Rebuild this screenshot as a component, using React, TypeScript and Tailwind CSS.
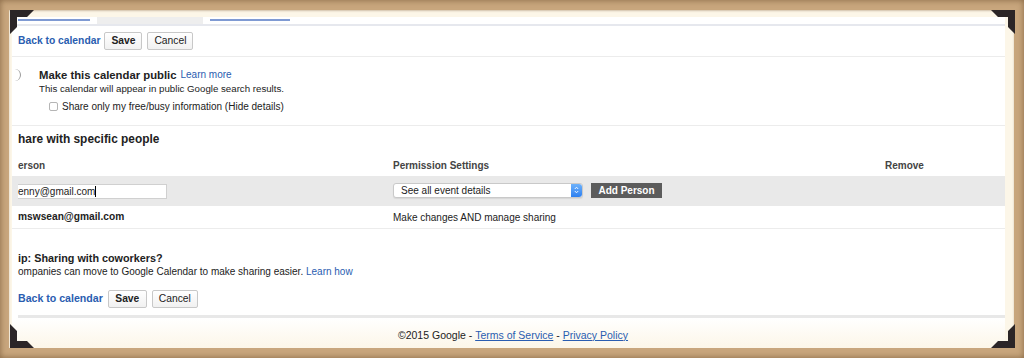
import React from "react";

const Corner = ({ className, rotate }: { className: string; rotate: string }) => (
  <svg
    width="24"
    height="24"
    viewBox="0 0 24 24"
    className={`absolute ${className}`}
    style={{ transform: `rotate(${rotate})` }}
  >
    <polygon points="0,0 24,0 17,7 7,7 7,17 0,24" fill="#2b2527" />
  </svg>
);

function Btn({ label, bold, w }: { label: string; bold?: boolean; w: string }) {
  return (
    <div
      className={`${w} h-[18px] flex items-center justify-center rounded-[2px] border border-[#c8c8c8] bg-gradient-to-b from-white to-[#f1f1f1] text-[10.3px] text-[#222] ${
        bold ? "font-bold" : ""
      }`}
    >
      {label}
    </div>
  );
}

function Toolbar({ big }: { big?: boolean }) {
  return (
    <div className="flex items-center pl-[6px]">
      <span className={`${big ? "text-[10.6px] mr-[5px]" : "text-[10.3px] mr-[4px]"} font-bold text-[#2a5db0]`}>
        Back to calendar
      </span>
      <Btn label="Save" bold w={big ? "w-[39px]" : "w-[38px]"} />
      <div className="w-[5px]" />
      <Btn label="Cancel" w="w-[46px]" />
    </div>
  );
}

export default function App() {
  return (
    <div className="relative w-[1024px] h-[358px] overflow-hidden bg-[#c8a67d] pt-[10px] pl-[9px] pr-[10px] pb-[10px] font-['Liberation_Sans',Arial,sans-serif] shadow-[inset_0_0_6px_rgba(90,60,30,0.6)]">
      <div className="h-full bg-[#fcf6e8] pt-[7px] pl-[3px] pr-[9px] flex flex-col shadow-[inset_0_1px_2px_rgba(120,90,50,0.35)]">
        <div className="flex-1 bg-white overflow-hidden flex flex-col text-[#222]">
          {/* tabs */}
          <div className="h-[9px] flex items-start border-b-2 border-[#e6e8ee]">
            <div className="ml-[6px] mt-[2px] w-[72px] h-[2px] bg-[#7f9ad3]" />
            <div className="ml-[7px] w-[106px] h-[7px] bg-[#eeeeee]" />
            <div className="ml-[7px] mt-[2px] w-[80px] h-[2px] bg-[#7f9ad3]" />
          </div>

          <div className="h-[31px] flex items-center border-b border-[#ececec]">
            <Toolbar />
          </div>

          {/* public */}
          <div className="h-[69px] pt-[11px] border-b border-[#ececec]">
            <div className="flex items-center h-[14px]">
              <div className="-ml-[3px] w-[12px] h-[12px] rounded-full border-r border-[#9a9a9a]" />
              <span className="ml-[18px] text-[11.3px] font-bold leading-[14px]">Make this calendar public</span>
              <span className="ml-[4px] text-[10px] text-[#2a5db0] leading-[14px]">Learn more</span>
            </div>
            <div className="pl-[27px] text-[9.7px] leading-[14px]">
              This calendar will appear in public Google search results.
            </div>
            <div className="mt-[3px] h-[15px] flex items-center pl-[37px]">
              <div className="w-[9px] h-[9px] rounded-[2px] border border-[#b5b5b5] bg-white" />
              <span className="ml-[4px] text-[10px]">Share only my free/busy information (Hide details)</span>
            </div>
          </div>

          {/* share */}
          <div className="pt-[5px]">
            <div className="pl-[6px] text-[11.9px] font-bold leading-[16px]">hare with specific people</div>
            <div className="h-[29px] grid grid-cols-[381px_492px_1fr] items-end pb-[4px] text-[10px] font-bold text-[#444] leading-[13px]">
              <div className="pl-[6px]">erson</div>
              <div>Permission Settings</div>
              <div>Remove</div>
            </div>
            <div className="h-[30px] grid grid-cols-[381px_492px_1fr] items-center bg-[#e9e9e9]">
              <div className="pl-[6px]">
                <div className="w-[149px] h-[15px] bg-white border-y border-r border-[#d0d0d0] flex items-center text-[10px]">
                  enny@gmail.com
                  <span className="w-px h-[11px] bg-black" />
                </div>
              </div>
              <div className="flex items-center -mt-[2px]">
                <div className="w-[190px] h-[15px] bg-white rounded-[3px] border border-[#c9c9c9] flex items-center justify-between shadow-[0_1px_1px_rgba(0,0,0,0.08)]">
                  <span className="pl-[7px] text-[10px] text-[#222]">See all event details</span>
                  <div className="w-[11px] h-[13px] rounded-r-[3px] bg-gradient-to-b from-[#6eb2fb] to-[#2c7ff0] flex items-center justify-center">
                    <svg width="5" height="8" viewBox="0 0 5 8">
                      <path d="M0.8 3 L2.5 1.2 L4.2 3 M0.8 5 L2.5 6.8 L4.2 5" stroke="white" strokeWidth="0.9" fill="none" />
                    </svg>
                  </div>
                </div>
                <div className="ml-[8px] w-[71px] h-[15px] bg-[#5c5c5c] text-white font-bold text-[10px] flex items-center justify-center">
                  Add Person
                </div>
              </div>
              <div />
            </div>
            <div className="h-[23px] grid grid-cols-[381px_492px_1fr] items-center border-b border-[#ececec] text-[10px]">
              <div className="pl-[6px] font-bold text-[10.2px]">mswsean@gmail.com</div>
              <div>Make changes AND manage sharing</div>
              <div />
            </div>
          </div>

          {/* tip */}
          <div className="mt-[22px] pl-[6px]">
            <div className="text-[10.8px] font-bold leading-[14px]">ip: Sharing with coworkers?</div>
            <div className="text-[10px] leading-[14px]">
              ompanies can move to Google Calendar to make sharing easier.{" "}
              <span className="text-[#2a5db0]">Learn how</span>
            </div>
          </div>

          <div className="mt-[11px] h-[18px] flex items-center">
            <Toolbar big />
          </div>

          <div className="mt-[7px] ml-[6px] h-[3px] bg-[#e8e8e8]" />

          <div className="flex-1 flex items-center justify-center pl-[9px] pt-[5px] bg-gradient-to-b from-white to-[#fcf6e8] text-[10.5px] text-[#222]">
            ©2015 Google -&nbsp;<span className="text-[#2a5db0] underline">Terms of Service</span>&nbsp;-&nbsp;
            <span className="text-[#2a5db0] underline">Privacy Policy</span>
          </div>
        </div>
      </div>

      <Corner className="left-[10px] top-[10px]" rotate="0deg" />
      <Corner className="left-[991px] top-[10px]" rotate="90deg" />
      <Corner className="left-[991px] top-[324px]" rotate="180deg" />
      <Corner className="left-[10px] top-[324px]" rotate="270deg" />
    </div>
  );
}
